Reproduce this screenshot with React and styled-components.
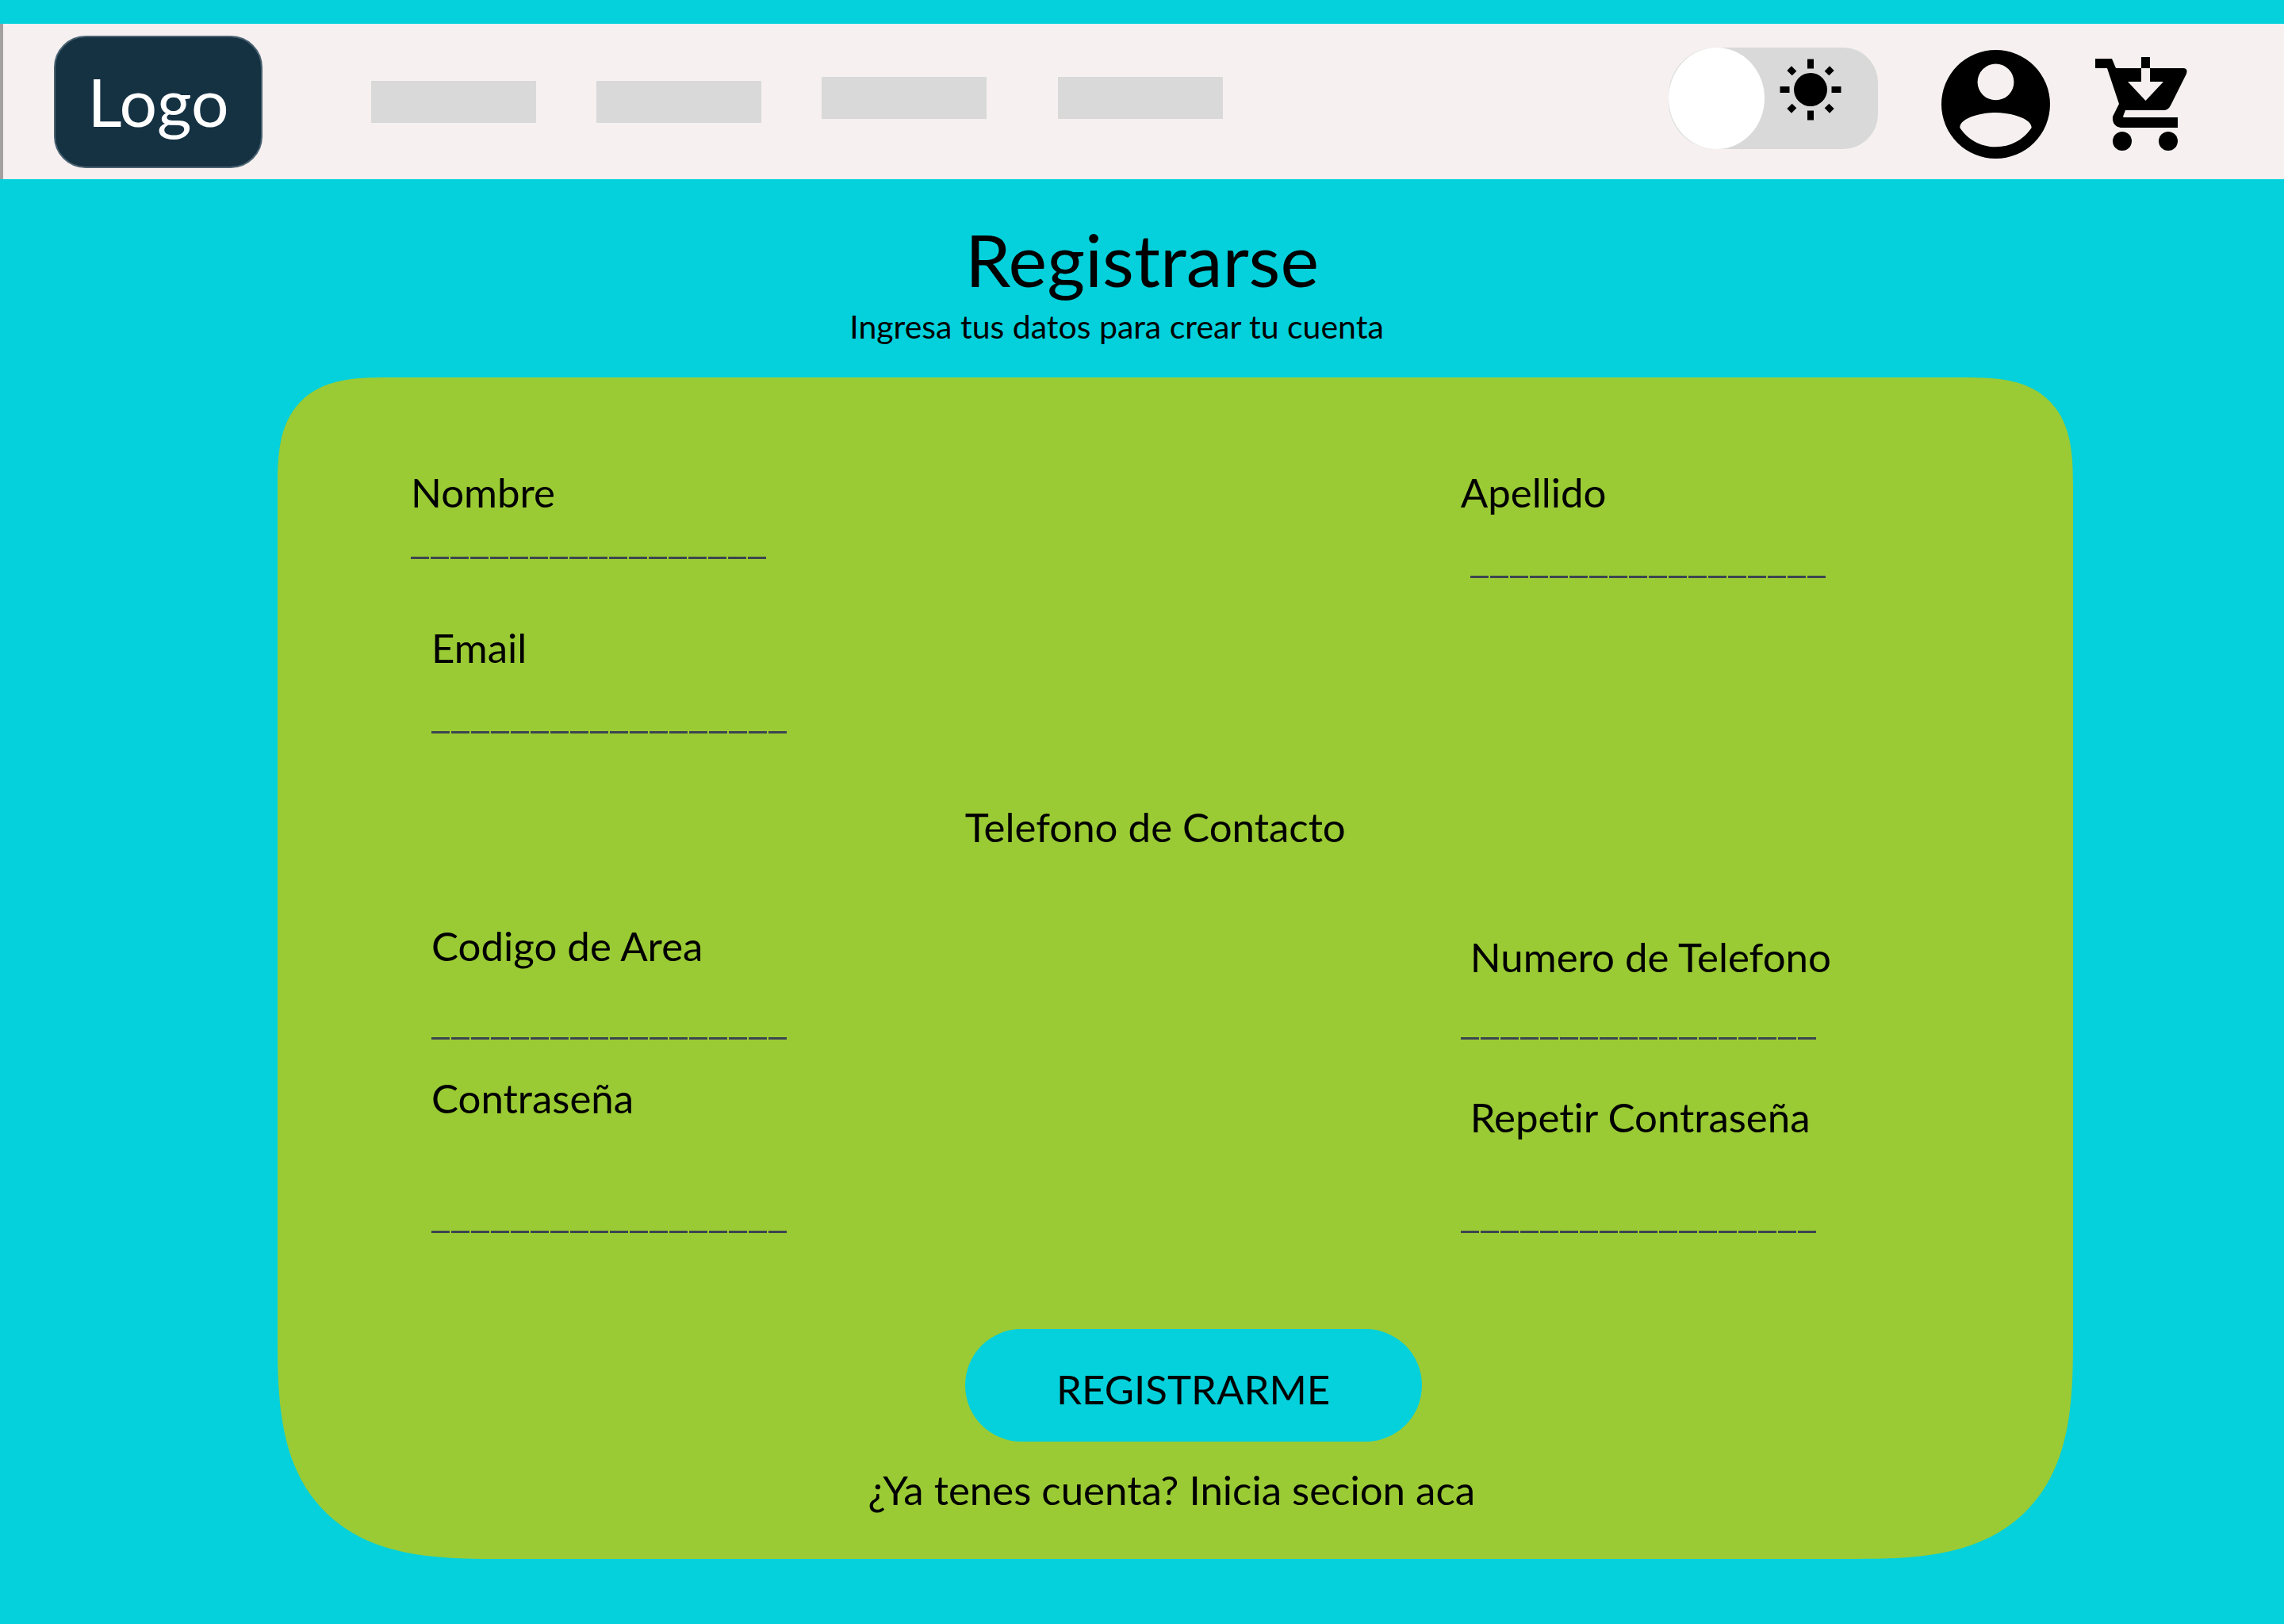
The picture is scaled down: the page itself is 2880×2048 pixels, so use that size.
import React, { useState } from "react";
import styled, { createGlobalStyle } from "styled-components";

const turquoise = "#04d1db";
const green = "#9acb34";
const grey = "#d9d9d9";
const ink = "#000000";

const GlobalStyle = createGlobalStyle`
  *, *::before, *::after { box-sizing: border-box; }
  body {
    margin: 0;
    background: ${turquoise};
    color: ${ink};
    font-family: Lato, "Open Sans", sans-serif;
    font-size: 51px;
    font-variant-ligatures: none;
    line-height: 60px;
  }
`;

const Page = styled.div`
  min-height: 100vh;
  padding-top: 30px;
`;

const Header = styled.header`
  display: flex;
  align-items: center;
  min-height: 196px;
  padding: 14px 121px 14px 64px;
  border-left: 4px solid #a3a0a0;
  background: #f6f0f0;
`;

const Logo = styled.a`
  display: flex;
  align-items: center;
  justify-content: center;
  width: 263px;
  height: 167px;
  border: 2px solid #4a6271;
  border-radius: 40px;
  background: #153243;
  color: #ffffff;
  font-size: 84px;
  line-height: 100px;
  text-decoration: none;
`;

const Nav = styled.nav`
  display: flex;
  align-items: center;
  gap: 76px;
  margin-left: 137px;
`;

const NavGroup = styled.div`
  display: flex;
  gap: ${(p) => (p.$raised ? "90px" : "76px")};
  padding-bottom: ${(p) => (p.$raised ? "10px" : "0")};
`;

const NavLink = styled.a`
  width: 208px;
  height: 53px;
  background: ${grey};
`;

const Actions = styled.div`
  display: flex;
  align-items: center;
  margin-left: auto;
  gap: 56px;
`;

const ThemeToggle = styled.label`
  position: relative;
  display: flex;
  width: 264px;
  height: 128px;
  margin: 0 24px 8px 0;
`;

const ToggleInput = styled.input`
  appearance: none;
  display: flex;
  justify-content: ${(p) => (p.checked ? "flex-end" : "flex-start")};
  width: 100%;
  height: 100%;
  margin: 0;
  border-radius: 60px 44px 44px 60px;
  background: ${grey};
  cursor: pointer;

  &::before {
    content: "";
    width: 121px;
    height: 128px;
    border-radius: 50%;
    background: #ffffff;
  }
`;

const SunIcon = styled.svg`
  position: absolute;
  top: 11px;
  right: 43px;
  width: 84px;
  height: 84px;
  pointer-events: none;
`;

const IconButton = styled.button`
  display: flex;
  padding: 6px 0 0;
  border: 0;
  background: none;
  color: ${ink};
  cursor: pointer;
`;

const Intro = styled.div`
  padding: 48px 0 40px;
  text-align: center;
`;

const Title = styled.h1`
  margin: 0 0 8px;
  font-size: 92px;
  font-weight: 400;
  line-height: 106px;
`;

const Subtitle = styled.p`
  margin: 0;
  padding-right: 64px;
  font-size: 41px;
  line-height: 48px;
`;

const Card = styled.form`
  margin: 0 266px 82px 350px;
  padding: 115px 0 57px 168px;
  border-radius: 100px 100px 200px 200px;
  background: ${green};

  @supports (corner-shape: superellipse(1.5)) {
    border-radius: 137px 137px 275px 275px;
    corner-shape: superellipse(1.5);
  }
`;

const Row = styled.div`
  display: grid;
  grid-template-columns: 12fr 7fr;
  align-items: ${(p) => p.$align || "start"};
  margin-bottom: ${(p) => p.$after}px;
`;

const FieldBox = styled.div`
  display: flex;
  flex-direction: column;
  align-items: flex-start;
  gap: ${(p) => p.$gap}px;
`;

const Label = styled.label`
  margin-left: ${(p) => p.$indent}px;
`;

const Input = styled.input`
  width: 448px;
  height: 54px;
  margin-left: ${(p) => p.$indent}px;
  padding: 0 0 4px;
  border: 0;
  outline: 0;
  background: repeating-linear-gradient(to right, #3d4550 0 23px, transparent 23px 25px)
    left bottom / 100% 3px no-repeat;
  color: ${ink};
  font: inherit;
`;

const GroupTitle = styled.h2`
  margin: 0 0 90px;
  padding-left: calc(100% / 3);
  font-size: 51px;
  font-weight: 400;
`;

const Submit = styled.button`
  display: block;
  width: 576px;
  height: 142px;
  margin: 0 0 31px calc(100% / 3);
  padding: 10px 0 0;
  border: 0;
  border-radius: 71px;
  background: ${turquoise};
  color: ${ink};
  font: inherit;
  cursor: pointer;
`;

const LoginLink = styled.a`
  display: block;
  width: fit-content;
  margin-left: 27.5%;
  color: ${ink};
  text-decoration: none;
`;

function Field({ id, label, type = "text", gap, labelIndent = 0, lineIndent = 0 }) {
  return (
    <FieldBox $gap={gap}>
      <Label htmlFor={id} $indent={labelIndent}>{label}</Label>
      <Input id={id} name={id} type={type} $indent={lineIndent} />
    </FieldBox>
  );
}

function Sun() {
  const angles = [0, 45, 90, 135, 180, 225, 270, 315];
  return (
    <SunIcon viewBox="-42 -42 84 84" aria-hidden="true">
      <circle r="21" />
      {angles.map((a) => (
        <rect
          key={a}
          x="-4"
          y={a % 90 ? -38 : -38.5}
          width="8"
          height={a % 90 ? 9 : 12}
          transform={`rotate(${a})`}
        />
      ))}
    </SunIcon>
  );
}

function Account() {
  return (
    <svg width="137" height="137" viewBox="2 2 20 20" fill="currentColor" aria-hidden="true">
      <path
        fillRule="evenodd"
        d="M12 2a10 10 0 1 0 0 20a10 10 0 1 0 0-20zM12 4.55a3.35 3.35 0 1 1 0 6.7a3.35 3.35 0 1 1 0-6.7zM12 19.85c-2.8 0-5.2-1.4-6.6-3.55c.05-1.9 4.2-2.75 6.6-2.75s6.55.85 6.6 2.75c-1.4 2.15-3.8 3.55-6.6 3.55z"
      />
    </svg>
  );
}

function Cart() {
  return (
    <svg width="118" height="119" viewBox="0 0 118 119" fill="currentColor" aria-hidden="true">
      <path
        fillRule="evenodd"
        d="M1 2H22L27 14H59V31H42L64.500 55L87 31H70V14H113Q118 15 116 21L96 61Q93 67 87 67H39L36 75Q36 76 38 76H105V89H33Q22 87 23 75L31 59L16 14H1Z"
      />
      <path d="M59 0H70V14H59Z" />
      <circle cx="35" cy="106" r="12" />
      <circle cx="93" cy="106" r="12" />
    </svg>
  );
}

export default function App() {
  const [dark, setDark] = useState(false);

  return (
    <>
      <GlobalStyle />
      <Page>
        <Header>
          <Logo href="#inicio">Logo</Logo>
          <Nav aria-label="Principal">
            <NavGroup>
              <NavLink href="#seccion-1" aria-label="Sección 1" />
              <NavLink href="#seccion-2" aria-label="Sección 2" />
            </NavGroup>
            <NavGroup $raised>
              <NavLink href="#seccion-3" aria-label="Sección 3" />
              <NavLink href="#seccion-4" aria-label="Sección 4" />
            </NavGroup>
          </Nav>
          <Actions>
            <ThemeToggle>
              <ToggleInput
                type="checkbox"
                role="switch"
                aria-label="Tema oscuro"
                checked={dark}
                onChange={(e) => setDark(e.target.checked)}
              />
              <Sun />
            </ThemeToggle>
            <IconButton type="button" aria-label="Cuenta">
              <Account />
            </IconButton>
            <IconButton type="button" aria-label="Carrito">
              <Cart />
            </IconButton>
          </Actions>
        </Header>

        <main>
          <Intro>
            <Title>Registrarse</Title>
            <Subtitle>Ingresa tus datos para crear tu cuenta</Subtitle>
          </Intro>

          <Card onSubmit={(e) => e.preventDefault()}>
            <Row $after={58}>
              <Field id="nombre" label="Nombre" gap={0} />
              <Field id="apellido" label="Apellido" gap={24} lineIndent={12} />
            </Row>
            <Row $after={88}>
              <Field id="email" label="Email" type="email" gap={24} labelIndent={26} lineIndent={26} />
            </Row>
            <GroupTitle>Telefono de Contacto</GroupTitle>
            <Row $align="end" $after={44}>
              <Field id="area" label="Codigo de Area" type="tel" gap={34} labelIndent={26} lineIndent={26} />
              <Field id="telefono" label="Numero de Telefono" type="tel" gap={20} labelIndent={12} />
            </Row>
            <Row $align="end" $after={121}>
              <Field id="clave" label="Contraseña" type="password" gap={86} labelIndent={26} lineIndent={26} />
              <Field id="clave2" label="Repetir Contraseña" type="password" gap={62} labelIndent={12} />
            </Row>
            <Submit type="submit">REGISTRARME</Submit>
            <LoginLink href="#ingresar">¿Ya tenes cuenta? Inicia secion aca</LoginLink>
          </Card>
        </main>
      </Page>
    </>
  );
}
